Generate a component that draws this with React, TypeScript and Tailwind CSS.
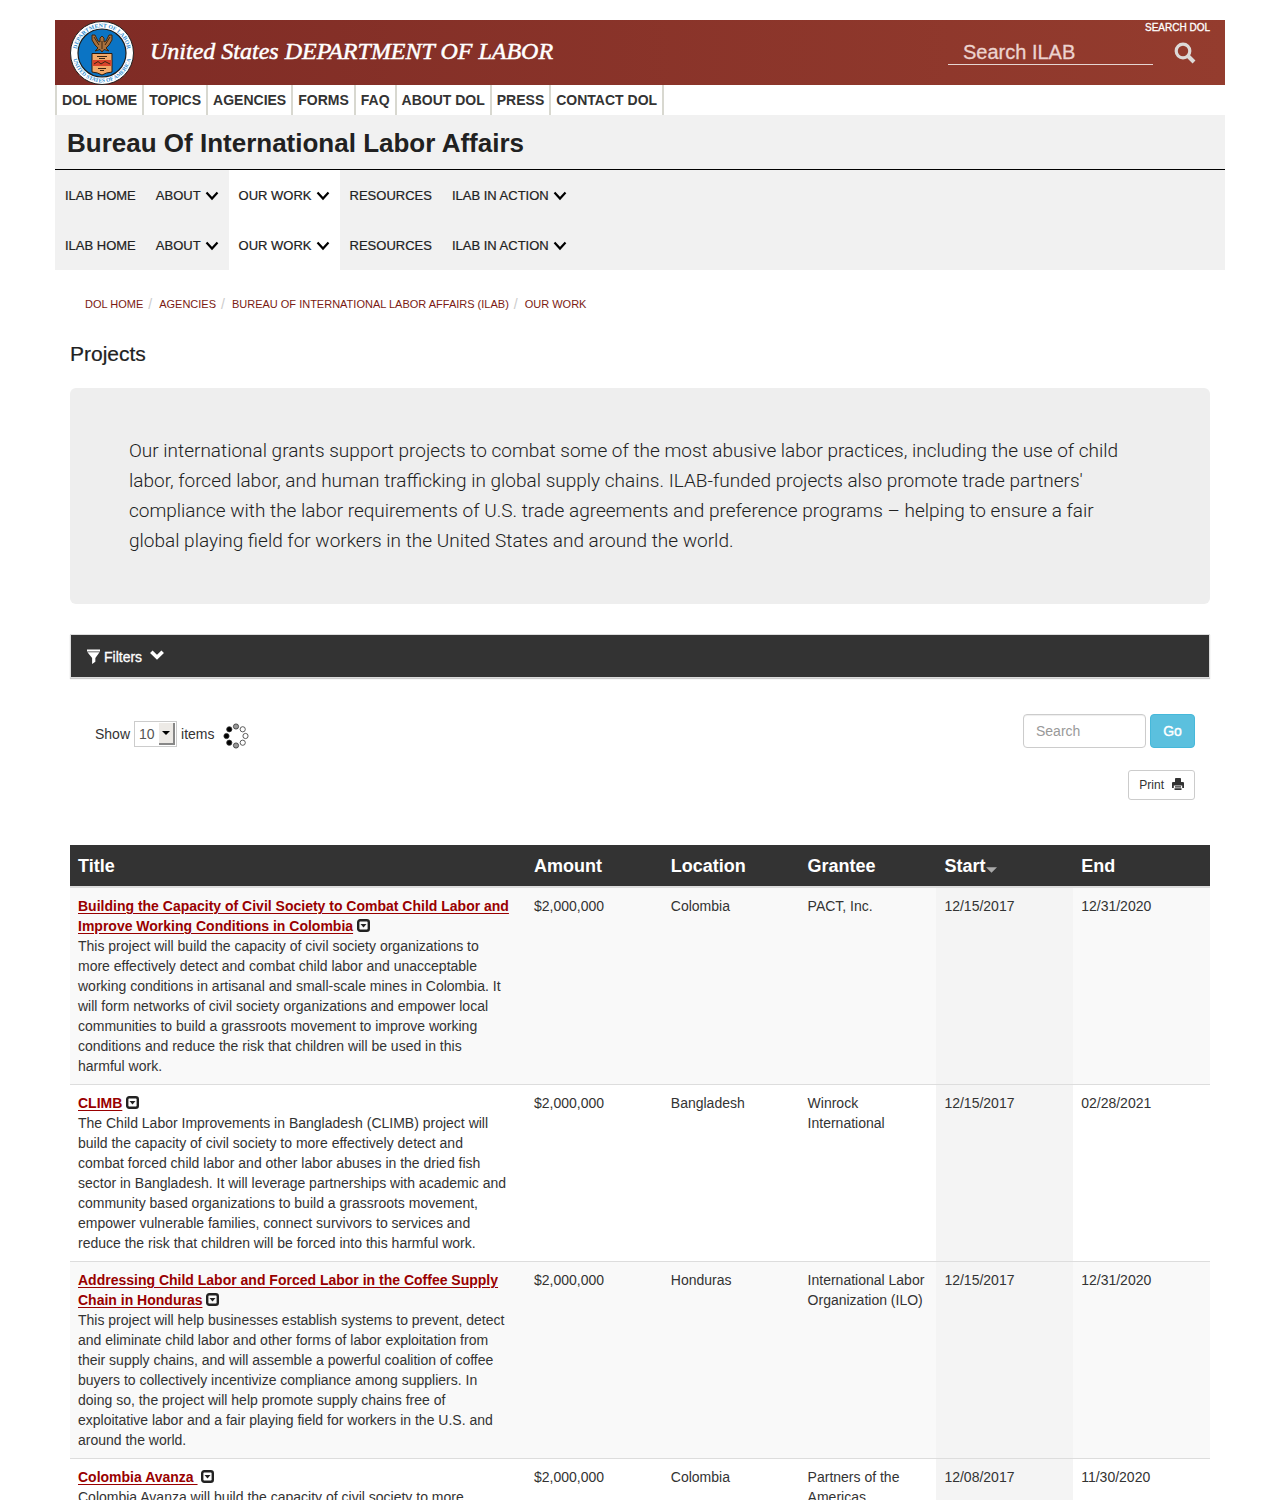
import React from "react";

const topLinks = ["DOL HOME", "TOPICS", "AGENCIES", "FORMS", "FAQ", "ABOUT DOL", "PRESS", "CONTACT DOL"];

const menu = [
  { label: "ILAB HOME" },
  { label: "ABOUT", sub: true },
  { label: "OUR WORK", sub: true, active: true },
  { label: "RESOURCES" },
  { label: "ILAB IN ACTION", sub: true },
];

const crumbs = ["DOL HOME", "AGENCIES", "BUREAU OF INTERNATIONAL LABOR AFFAIRS (ILAB)", "OUR WORK"];

const columns = ["Title", "Amount", "Location", "Grantee", "Start", "End"];

const projects = [
  {
    title: "Building the Capacity of Civil Society to Combat Child Labor and Improve Working Conditions in Colombia",
    text: "This project will build the capacity of civil society organizations to more effectively detect and combat child labor and unacceptable working conditions in artisanal and small-scale mines in Colombia. It will form networks of civil society organizations and empower local communities to build a grassroots movement to improve working conditions and reduce the risk that children will be used in this harmful work.",
    amount: "$2,000,000",
    location: "Colombia",
    grantee: "PACT, Inc.",
    start: "12/15/2017",
    end: "12/31/2020",
  },
  {
    title: "CLIMB",
    text: "The Child Labor Improvements in Bangladesh (CLIMB) project will build the capacity of civil society to more effectively detect and combat forced child labor and other labor abuses in the dried fish sector in Bangladesh. It will leverage partnerships with academic and community based organizations to build a grassroots movement, empower vulnerable families, connect survivors to services and reduce the risk that children will be forced into this harmful work.",
    amount: "$2,000,000",
    location: "Bangladesh",
    grantee: "Winrock International",
    start: "12/15/2017",
    end: "02/28/2021",
  },
  {
    title: "Addressing Child Labor and Forced Labor in the Coffee Supply Chain in Honduras",
    text: "This project will help businesses establish systems to prevent, detect and eliminate child labor and other forms of labor exploitation from their supply chains, and will assemble a powerful coalition of coffee buyers to collectively incentivize compliance among suppliers. In doing so, the project will help promote supply chains free of exploitative labor and a fair playing field for workers in the U.S. and around the world.",
    amount: "$2,000,000",
    location: "Honduras",
    grantee: "International Labor Organization (ILO)",
    start: "12/15/2017",
    end: "12/31/2020",
  },
  {
    title: "Colombia Avanza\u00a0",
    text: "Colombia Avanza will build the capacity of civil society to more",
    amount: "$2,000,000",
    location: "Colombia",
    grantee: "Partners of the Americas",
    start: "12/08/2017",
    end: "11/30/2020",
  },
];

function Seal() {
  return (
    <svg viewBox="0 0 64 64" className="size-16 shrink-0" role="img" aria-label="Department of Labor seal">
      <defs>
        <path id="arc-top" d="M6.500 32 A25.500 25.500 0 0 1 57.500 32" />
        <path id="arc-bottom" d="M2.700 32 A29.300 29.300 0 0 0 61.300 32" />
      </defs>
      <circle cx="32" cy="32" r="31.500" fill="#fff" stroke="#222" strokeWidth="1" />
      <circle cx="32" cy="32" r="24" fill="#0b74c4" stroke="#1c1c1c" strokeWidth="1.200" />
      <g fill="#2e8bd0" fontFamily="Liberation Serif, serif" fontWeight="700">
        <text fontSize="5.800">
          <textPath href="#arc-top" startOffset="50%" textAnchor="middle">DEPARTMENT OF LABOR</textPath>
        </text>
        <text fontSize="5.500">
          <textPath href="#arc-bottom" startOffset="50%" textAnchor="middle">UNITED STATES OF AMERICA</textPath>
        </text>
      </g>
      <path
        d="M22 14 L25 14 L28 20 L30 21 L30 17 L32 15 L34 17 L34 21 L36 20 L39 14 L42 14 L42 19 L39 24 L36 27 L39 30 L34 28.500 L32 31 L30 28.500 L25 30 L28 27 L25 24 L22 19 Z"
        fill="#a8703c"
        stroke="#3a2512"
        strokeWidth="1"
      />
      <path d="M24 16 L29 24 M40 16 L35 24 M32 20 V28" stroke="#3a2512" strokeWidth="1" fill="none" />
      <path d="M22 32.500 H42 V51 Q36 51.500 32 54 Q28 51.500 22 51 Z" fill="#f0a868" stroke="#2a1a10" strokeWidth="1" />
      <rect x="22.500" y="39" width="19" height="6" fill="#d9442b" />
      <path d="M27 35.500 H37 M29 37.500 H35 M24 43 L28 40.500 L31 43 L35 40.500 L40 43 M28 47.500 H36 M30 49.500 H34" stroke="#3a2512" strokeWidth="1" fill="none" />
    </svg>
  );
}

function MenuRow() {
  return (
    <ul className="flex h-[50px] bg-[#f1f1f1] text-[13px] text-[#212121] [-webkit-text-stroke:0.2px_#212121]">
      {menu.map((m) => (
        <li key={m.label} className={m.active ? "bg-white" : ""}>
          <a href="#" className="flex h-full items-center gap-1 px-[10px] pt-0.5">
            {m.label}
            {m.sub && (
              <svg viewBox="0 0 14 10" className="h-[10px] w-[14px]" fill="none" stroke="#000" strokeWidth="2.2">
                <path d="M1.500 1.500 L7 7.500 L12.500 1.500" />
              </svg>
            )}
          </a>
        </li>
      ))}
    </ul>
  );
}

function Spinner() {
  const fills = ["#999", "#fff", "#fff", "#fff", "#999", "#000", "#000", "#000"];
  return (
    <svg viewBox="0 0 26 26" className="mt-1 ml-[9px] size-[26px]" role="img" aria-label="Loading">
      {fills.map((f, i) => {
        const a = (i * Math.PI) / 4;
        return (
          <circle key={i} cx={13 + 9.5 * Math.sin(a)} cy={13 - 9.5 * Math.cos(a)} r="2.600" fill={f} stroke="#333" strokeWidth="0.800" />
        );
      })}
    </svg>
  );
}

export default function App() {
  return (
    <div className="h-screen overflow-hidden bg-white px-[55px] pt-5 font-['Liberation_Sans',Arial,sans-serif] text-sm leading-5 text-[#333]">
      <div className="mx-auto max-w-[1170px]">
        <header>
          <div className="flex h-[65px] bg-linear-to-r from-[#7f2b25] to-[#943c2e] px-[15px]">
            <a href="#" className="flex items-center">
              <Seal />
              <span className="ml-4 pb-1 font-['Liberation_Serif',serif] text-2xl text-white italic [-webkit-text-stroke:0.5px_white]">
                United States DEPARTMENT OF LABOR
              </span>
            </a>
            <form className="ml-auto flex flex-col items-end" onSubmit={(e) => e.preventDefault()}>
              <a href="#" className="text-[10px] leading-4 text-white [-webkit-text-stroke:0.3px_white]">SEARCH DOL</a>
              <div className="flex items-center">
                <input
                  aria-label="Search ILAB"
                  placeholder="Search ILAB"
                  className="h-[29px] w-[205px] border-b border-[#e6d5d2] bg-transparent px-[15px] pt-1 text-xl text-white outline-none [-webkit-text-stroke:0.3px_#ecd3cf] placeholder:text-[#ecd3cf]"
                />
                <button aria-label="Search" className="mt-1 mr-[14px] ml-[21px]">
                  <svg viewBox="0 0 22 22" className="size-[22px]" fill="none" stroke="#dddad8">
                    <circle cx="9" cy="9" r="6.800" strokeWidth="3.200" />
                    <path d="M14 14 L20 20" strokeWidth="4" />
                  </svg>
                </button>
              </div>
            </form>
          </div>
          <ul className="flex h-[30px] font-bold">
            {topLinks.map((t) => (
              <li key={t} className="border-l-2 border-[#d8d8d0] px-[5px] leading-[30px] last:border-r-2">
                <a href="#">{t}</a>
              </li>
            ))}
          </ul>
          <div className="flex h-[55px] items-center border-b border-black bg-[#f1f1f1] px-3 pt-0.5">
            <h2 className="text-[26px] leading-8 font-bold text-[#212121]">Bureau Of International Labor Affairs</h2>
          </div>
          <nav>
            <MenuRow />
            <MenuRow />
          </nav>
        </header>

        <main className="px-[15px]">
          <ol className="mt-6 flex h-5 px-[15px] text-[11px] leading-5">
            {crumbs.map((c, i) => (
              <li key={c} className="flex">
                {i > 0 && <span className="pr-[7px] pl-[5px] text-sm text-[#ccc]">/</span>}
                <a href="#" className="text-[#7b1a12]">{c}</a>
              </li>
            ))}
          </ol>
          <h1 className="mt-7 text-[21px] leading-6 text-[#212121] [-webkit-text-stroke:0.2px_#212121]">Projects</h1>

          <section className="mt-[22px] rounded-md bg-[#eee] py-12 pr-20 pl-[59px]">
            <p className="font-['Roboto','Liberation_Sans',sans-serif] text-[19px] leading-[30px] font-light text-[#212121]">
              Our international grants support projects to combat some of the most abusive labor practices, including the use of child labor, forced labor, and human trafficking in global supply chains. ILAB-funded projects also promote trade partners' compliance with the labor requirements of U.S. trade agreements and preference programs – helping to ensure a fair global playing field for workers in the United States and around the world.
            </p>
          </section>

          <button className="mt-[30px] flex h-[44px] w-full items-center border border-[#ddd] bg-[#333] pt-0.5 pl-4 text-left text-white shadow-[0_1px_1px_#ccc] [-webkit-text-stroke:0.3px_white]">
            <svg viewBox="0 0 14 16" className="mr-1 h-4 w-[13px]" fill="#fff">
              <path d="M0 0 H14 V2 H0 Z M0.500 2.800 H13.500 L9 9 V13 L5.500 15.500 V9 Z" />
            </svg>
            Filters
            <svg viewBox="0 0 14 10" className="mb-1 ml-2 h-[10px] w-[14px]" fill="none" stroke="#fff" strokeWidth="3.600">
              <path d="M1.300 1.800 L7 7.300 L12.700 1.800" />
            </svg>
          </button>

          <div className="mt-9 flex items-start px-[15px]">
            <div className="ml-[10px] flex h-10 items-center">
              <label htmlFor="page-size">Show</label>
              <span className="relative mx-1 flex">
                <select id="page-size" className="h-[26px] w-[43px] appearance-none border border-[#ccc] bg-white pl-1 text-[#555]">
                  <option>10</option>
                </select>
                <span className="pointer-events-none absolute top-[2px] right-[2px] flex h-[22px] w-4 items-center justify-center border-r-2 border-b-2 border-[#888] bg-[#edeae6]">
                  <svg viewBox="0 0 8 4" className="h-1 w-2"><path d="M0 0 H8 L4 4 Z" /></svg>
                </span>
              </span>
              <span>items</span>
              <Spinner />
            </div>
            <div className="ml-auto flex flex-col items-end">
              <div className="flex gap-1">
                <input
                  aria-label="Search"
                  placeholder="Search"
                  className="h-[34px] w-[123px] rounded-sm border border-[#ccc] px-3 shadow-[inset_0_1px_1px_#eee] placeholder:text-[#999]"
                />
                <button className="h-[34px] w-[45px] rounded-sm border border-[#46b8da] bg-[#5bc0de] text-white [-webkit-text-stroke:0.4px_white]">Go</button>
              </div>
              <button className="mt-[22px] flex h-[30px] items-center rounded-[3px] border border-[#ccc] px-[10px] text-xs">
                Print
                <svg viewBox="0 0 12 12" className="mb-0.5 ml-2 size-3" fill="#333">
                  <path d="M3 0.500 Q3 0 4 0 H8 Q9 0 9 0.500 V4 H3 Z M1 4 H11 Q12 4 12 5 V10 H10.200 V7.500 H1.800 V10 H0 V5 Q0 4 1 4 Z M3 8.300 H9 V9.600 H3 Z M2.500 10.200 H9.500 V12 H2.500 Z" />
                </svg>
              </button>
            </div>
          </div>

          <table className="mt-[45px] w-full table-fixed text-left">
            <colgroup>
              <col className="w-[40%]" />
              <col className="w-[12%]" />
              <col className="w-[12%]" />
              <col className="w-[12%]" />
              <col className="w-[12%]" />
              <col className="w-[12%]" />
            </colgroup>
            <thead>
              <tr className="h-[42px] border-b-2 border-[#ddd] bg-[#333] text-lg leading-6 text-white">
                {columns.map((c) => (
                  <th key={c} scope="col" className="px-2 font-bold">
                    {c}
                    {c === "Start" && (
                      <svg viewBox="0 0 10 5" className="ml-px inline h-[6px] w-[11px] align-[-1px]" fill="#aaa">
                        <path d="M0 0 H10 L5 5 Z" />
                      </svg>
                    )}
                  </th>
                ))}
              </tr>
            </thead>
            <tbody>
              {projects.map((p) => (
                <tr key={p.title} className="border-b border-[#ddd] align-top odd:bg-[#f9f9f9]">
                  <td className="py-2 pr-[15px] pl-2">
                    <a href="#" className="font-bold text-[#900] underline underline-offset-2">{p.title}</a>{" "}
                    <svg viewBox="0 0 13 13" className="inline size-[13px] align-[-1px]">
                      <rect x="1.200" y="1.200" width="10.600" height="10.600" rx="2" fill="none" stroke="#222" strokeWidth="2.400" />
                      <path d="M3.500 5 H9.500 L6.500 8.500 Z" fill="#222" />
                    </svg>
                    <p>{p.text}</p>
                  </td>
                  <td className="p-2">{p.amount}</td>
                  <td className="p-2">{p.location}</td>
                  <td className="p-2">{p.grantee}</td>
                  <td className="bg-[#f4f4f4] p-2">{p.start}</td>
                  <td className="p-2">{p.end}</td>
                </tr>
              ))}
            </tbody>
          </table>
        </main>
      </div>
    </div>
  );
}
